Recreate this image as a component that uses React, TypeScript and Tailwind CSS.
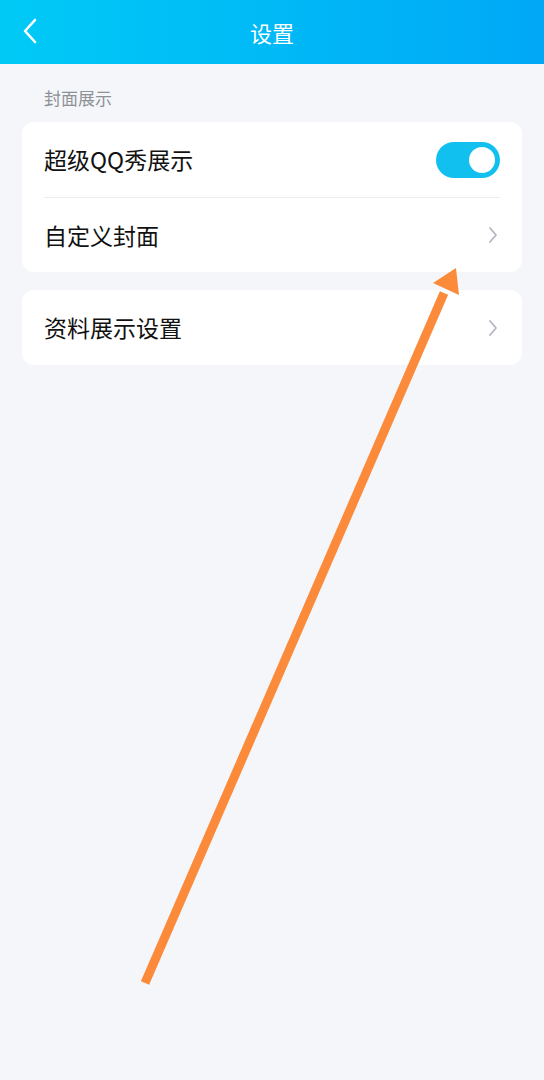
import React from 'react';

const font = { fontFamily: '"Noto Sans CJK SC", "Noto Sans", sans-serif' };

const Chevron = () => (
  <svg width="10" height="18" viewBox="0 0 10 18" fill="none" className="shrink-0">
    <path d="M2 2l6 7-6 7" stroke="#b4b7bd" strokeWidth="1.8" strokeLinecap="round" strokeLinejoin="round" />
  </svg>
);

const Toggle = () => (
  <div className="w-[64px] h-[36px] rounded-full bg-[#12c0ef] flex items-center justify-end pr-[5px]">
    <div className="w-[26px] h-[26px] rounded-full bg-white" />
  </div>
);

export default function App() {
  return (
    <div className="relative w-[544px] h-[1080px] bg-[#f5f6fa] overflow-hidden" style={font}>
      {/* header */}
      <div className="h-[64px] bg-gradient-to-r from-[#00caf6] to-[#00a8f6] flex items-center relative">
        <svg width="16" height="26" viewBox="0 0 16 26" className="absolute left-[22px] top-[18px]" fill="none">
          <path d="M13 2L3 13l10 11" stroke="white" strokeWidth="2.6" strokeLinecap="round" strokeLinejoin="round" />
        </svg>
        <div className="flex-1 text-center text-white text-[22px] leading-none">设置</div>
      </div>

      <div className="px-[22px]">
        <div className="pl-[22px] pt-[22px] pb-[12px] text-[17px] leading-[24px] text-[#8e9196]">封面展示</div>

        {/* card 1 */}
        <div className="bg-white rounded-[12px] px-[22px]">
          <div className="h-[76px] flex items-center justify-between border-b border-[#ececee]">
            <span className="text-[23px] text-[#111]">超级QQ秀展示</span>
            <Toggle />
          </div>
          <div className="h-[74px] flex items-center justify-between pr-[2px]">
            <span className="text-[23px] text-[#111]">自定义封面</span>
            <Chevron />
          </div>
        </div>

        {/* card 2 */}
        <div className="bg-white rounded-[12px] px-[22px] mt-[18px]">
          <div className="h-[75px] flex items-center justify-between pr-[2px]">
            <span className="text-[23px] text-[#111]">资料展示设置</span>
            <Chevron />
          </div>
        </div>
      </div>

      {/* annotation arrow */}
      <svg className="absolute left-0 top-0 pointer-events-none" width="544" height="1080" viewBox="0 0 544 1080">
        <line x1="145" y1="983" x2="444" y2="293" stroke="#fb8b3a" strokeWidth="9" strokeLinecap="butt" />
        <polygon points="456,268 433,283 459,295" fill="#fb8b3a" />
      </svg>
    </div>
  );
}
